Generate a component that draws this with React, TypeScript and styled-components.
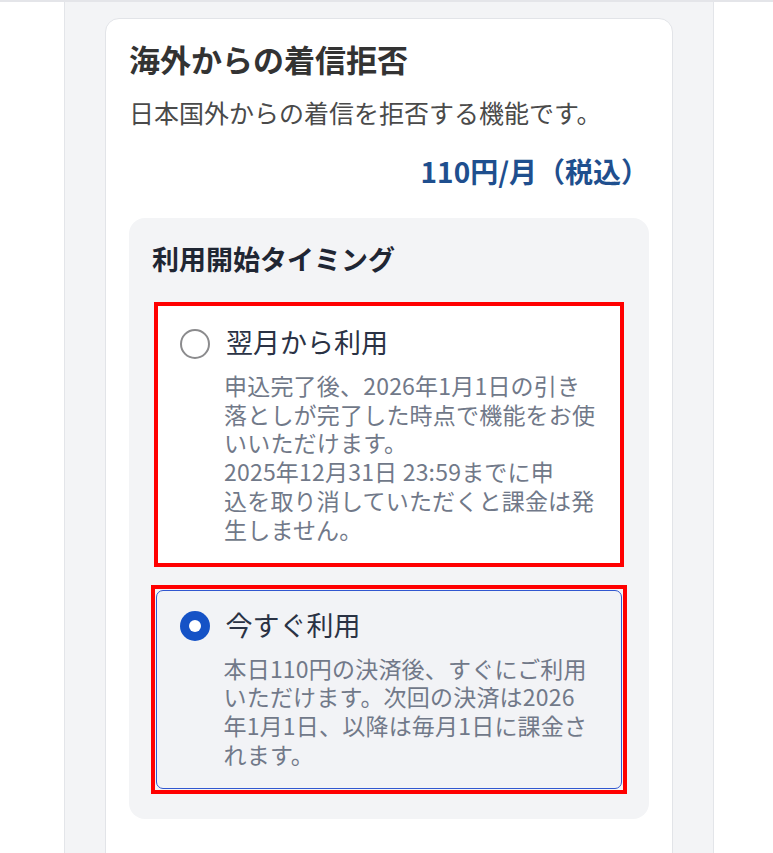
import React from "react";
import styled, { createGlobalStyle, css } from "styled-components";

const GlobalStyle = createGlobalStyle`
  html, body {
    margin: 0;
    padding: 0;
    background: #ffffff;
  }
  body {
    font-family: "Noto Sans CJK JP", "Noto Sans", sans-serif;
    -webkit-font-smoothing: antialiased;
  }
  * { box-sizing: border-box; }
`;

const Viewport = styled.div`
  min-height: 853px;
  border-top: 2px solid #e4e5e9;
  display: flex;
  padding-left: 64px;
`;

const Column = styled.main`
  width: 650px;
  min-height: 851px;
  background: #f3f4f6;
  border-left: 1px solid #e3e5e9;
  border-right: 1px solid #e3e5e9;
  padding: 16px 40px 0 40px;
`;

const Card = styled.section`
  background: #ffffff;
  border: 1px solid #e2e4e8;
  border-radius: 14px;
  padding: 19px 23px 40px 23px;
  min-height: 860px;
`;

const Title = styled.h1`
  margin: 0;
  font-size: 31px;
  line-height: 42px;
  font-weight: 700;
  color: #333333;
`;

const Lead = styled.p`
  margin: 14px 0 0 0;
  font-size: 25px;
  line-height: 37px;
  color: #4a4a4a;
`;

const Price = styled.p`
  margin: 21px 0 0 0;
  text-align: right;
  font-size: 28px;
  line-height: 38px;
  font-weight: 700;
  color: #1f4f8e;
`;

const TimingBox = styled.div`
  margin-top: 28px;
  background: #f3f4f6;
  border-radius: 16px;
  padding: 22px 24px 25px 23px;
`;

const TimingHeading = styled.h2`
  margin: 0;
  font-size: 27px;
  line-height: 38px;
  font-weight: 700;
  color: #1f2633;
`;

const OptionList = styled.div`
  margin-top: 24px;
  padding: 0 1px 0 2px;
  display: flex;
  flex-direction: column;
  gap: 18px;
`;

/* red annotation frame drawn around each choice */
const Highlight = styled.div<{ $wide: boolean }>`
  border: 4px solid #ff0000;
  padding: ${({ $wide }) => ($wide ? "1px" : "0")};
  margin: ${({ $wide }) => ($wide ? "0 -3px" : "0")};
`;

const Option = styled.label<{ $selected: boolean }>`
  display: grid;
  grid-template-columns: 30px 1fr;
  column-gap: 16px;
  align-items: center;
  cursor: pointer;
  ${({ $selected }) =>
    $selected
      ? css`
          background: #f2f3f6;
          border: 1.5px solid #3157d0;
          border-radius: 7px;
          padding: 15.5px 20px 19px 22.5px;
        `
      : css`
          background: #ffffff;
          padding: 18px 20px 20px 22px;
        `}
`;

const Radio = styled.span<{ $checked: boolean }>`
  width: 30px;
  height: 30px;
  border-radius: 50%;
  display: flex;
  align-items: center;
  justify-content: center;
  margin-top: 3px;
  ${({ $checked }) =>
    $checked
      ? css`
          background: #1552c6;
          &::after {
            content: "";
            width: 12px;
            height: 12px;
            border-radius: 50%;
            background: #ffffff;
          }
        `
      : css`
          border: 2.5px solid #8b8b8d;
          background: #ffffff;
        `}
`;

const OptionLabel = styled.span`
  font-size: 27px;
  line-height: 36px;
  color: #2a3244;
`;

const OptionText = styled.p`
  grid-column: 2;
  margin: 11px 0 0 -2px;
  font-size: 23px;
  line-height: 28.7px;
  color: #717989;
`;

const Line = styled.span`
  display: block;
  white-space: nowrap;
  letter-spacing: 0.2px;
`;

type Choice = {
  id: string;
  label: string;
  lines: string[];
};

const choices: Choice[] = [
  {
    id: "next",
    label: "翌月から利用",
    lines: [
      "申込完了後、2026年1月1日の引き",
      "落としが完了した時点で機能をお使",
      "いいただけます。",
      "2025年12月31日 23:59までに申",
      "込を取り消していただくと課金は発",
      "生しません。",
    ],
  },
  {
    id: "now",
    label: "今すぐ利用",
    lines: [
      "本日110円の決済後、すぐにご利用",
      "いただけます。次回の決済は2026",
      "年1月1日、以降は毎月1日に課金さ",
      "れます。",
    ],
  },
];

export default function App() {
  const [selected, setSelected] = React.useState("now");
  return (
    <>
      <GlobalStyle />
      <Viewport>
        <Column>
          <Card>
            <Title>海外からの着信拒否</Title>
            <Lead>日本国外からの着信を拒否する機能です。</Lead>
            <Price>110円/月（税込）</Price>
            <TimingBox>
              <TimingHeading>利用開始タイミング</TimingHeading>
              <OptionList>
                {choices.map((c) => {
                  const isOn = selected === c.id;
                  return (
                    <Highlight key={c.id} $wide={isOn}>
                      <Option $selected={isOn} onClick={() => setSelected(c.id)}>
                        <Radio $checked={isOn} />
                        <OptionLabel>{c.label}</OptionLabel>
                        <OptionText>
                          {c.lines.map((l, i) => (
                            <Line key={i}>{l}</Line>
                          ))}
                        </OptionText>
                      </Option>
                    </Highlight>
                  );
                })}
              </OptionList>
            </TimingBox>
          </Card>
        </Column>
      </Viewport>
    </>
  );
}
